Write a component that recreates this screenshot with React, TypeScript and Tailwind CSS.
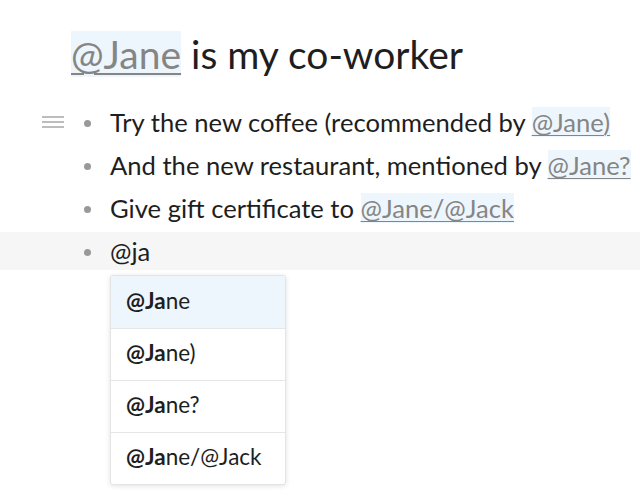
import React from 'react'

// Outline with @mention autocomplete popup

const mentionCls =
  'bg-[#eef6fd] text-[#858585] underline decoration-[#858585] underline-offset-[3px]'

function Mention({ children, thick = false }: { children: React.ReactNode; thick?: boolean }) {
  return (
    <span className={mentionCls + (thick ? ' decoration-2 underline-offset-[4px]' : ' decoration-1')}>
      {children}
    </span>
  )
}

function Hamburger() {
  return (
    <svg width="22" height="12" viewBox="0 0 22 12" className="text-[#a8a8a8]">
      <path d="M0 1h22M0 6h22M0 11h22" stroke="currentColor" strokeWidth="1.3" />
    </svg>
  )
}

const suggestions = ['ne', 'ne)', 'ne?', 'ne/@Jack']

export default function App() {
  const rows: { text: React.ReactNode; active?: boolean; handle?: boolean }[] = [
    {
      text: (
        <>
          Try the new coffee (recommended by <Mention>@Jane)</Mention>
        </>
      ),
      handle: true,
    },
    {
      text: (
        <>
          And the new restaurant, mentioned by <Mention>@Jane?</Mention>
        </>
      ),
    },
    {
      text: (
        <>
          Give gift certificate to <Mention>@Jane/@Jack</Mention>
        </>
      ),
    },
    { text: '@ja', active: true },
  ]

  return (
    <div className="w-[640px] h-[500px] bg-white overflow-hidden font-['Lato',sans-serif] text-[#1e1e1e]">
      <h1 className="pl-[71px] pt-[32px] text-[39px] leading-[44px] font-normal">
        <Mention thick>@Jane</Mention> is my co-worker
      </h1>

      <div className="mt-[27px] flex flex-col gap-[5px]">
        {rows.map((row, i) => (
          <div key={i} className="relative">
            <div
              className={
                'flex items-center h-[38px] text-[25.6px] leading-[34px] ' +
                (row.active ? 'bg-[#f6f6f6]' : '')
              }
            >
              <div className="w-[42px]" />
              <div className="w-[22px] flex items-center">{row.handle && <Hamburger />}</div>
              <div className="w-[46px] flex items-center pl-[20px] pt-[2px]">
                <span className="w-[7px] h-[7px] rounded-full bg-[#999]" />
              </div>
              <span className="whitespace-nowrap">{row.text}</span>
            </div>

            {row.active && (
              <div className="absolute left-[110px] top-[43px] w-[176px] bg-white rounded-[3px] border border-[#e4e4e4] shadow-[0_1px_5px_rgba(0,0,0,0.12)] overflow-hidden text-[22.5px]">
                {suggestions.map((s, j) => (
                  <div
                    key={j}
                    className={
                      'h-[52px] flex items-center pl-[15px] pb-[3px] ' +
                      (j > 0 ? 'border-t border-[#e6e6e6] ' : '') +
                      (j === 0 ? 'bg-[#edf5fd]' : '')
                    }
                  >
                    <span className="font-bold">@Ja</span>
                    <span>{s}</span>
                  </div>
                ))}
              </div>
            )}
          </div>
        ))}
      </div>
    </div>
  )
}
